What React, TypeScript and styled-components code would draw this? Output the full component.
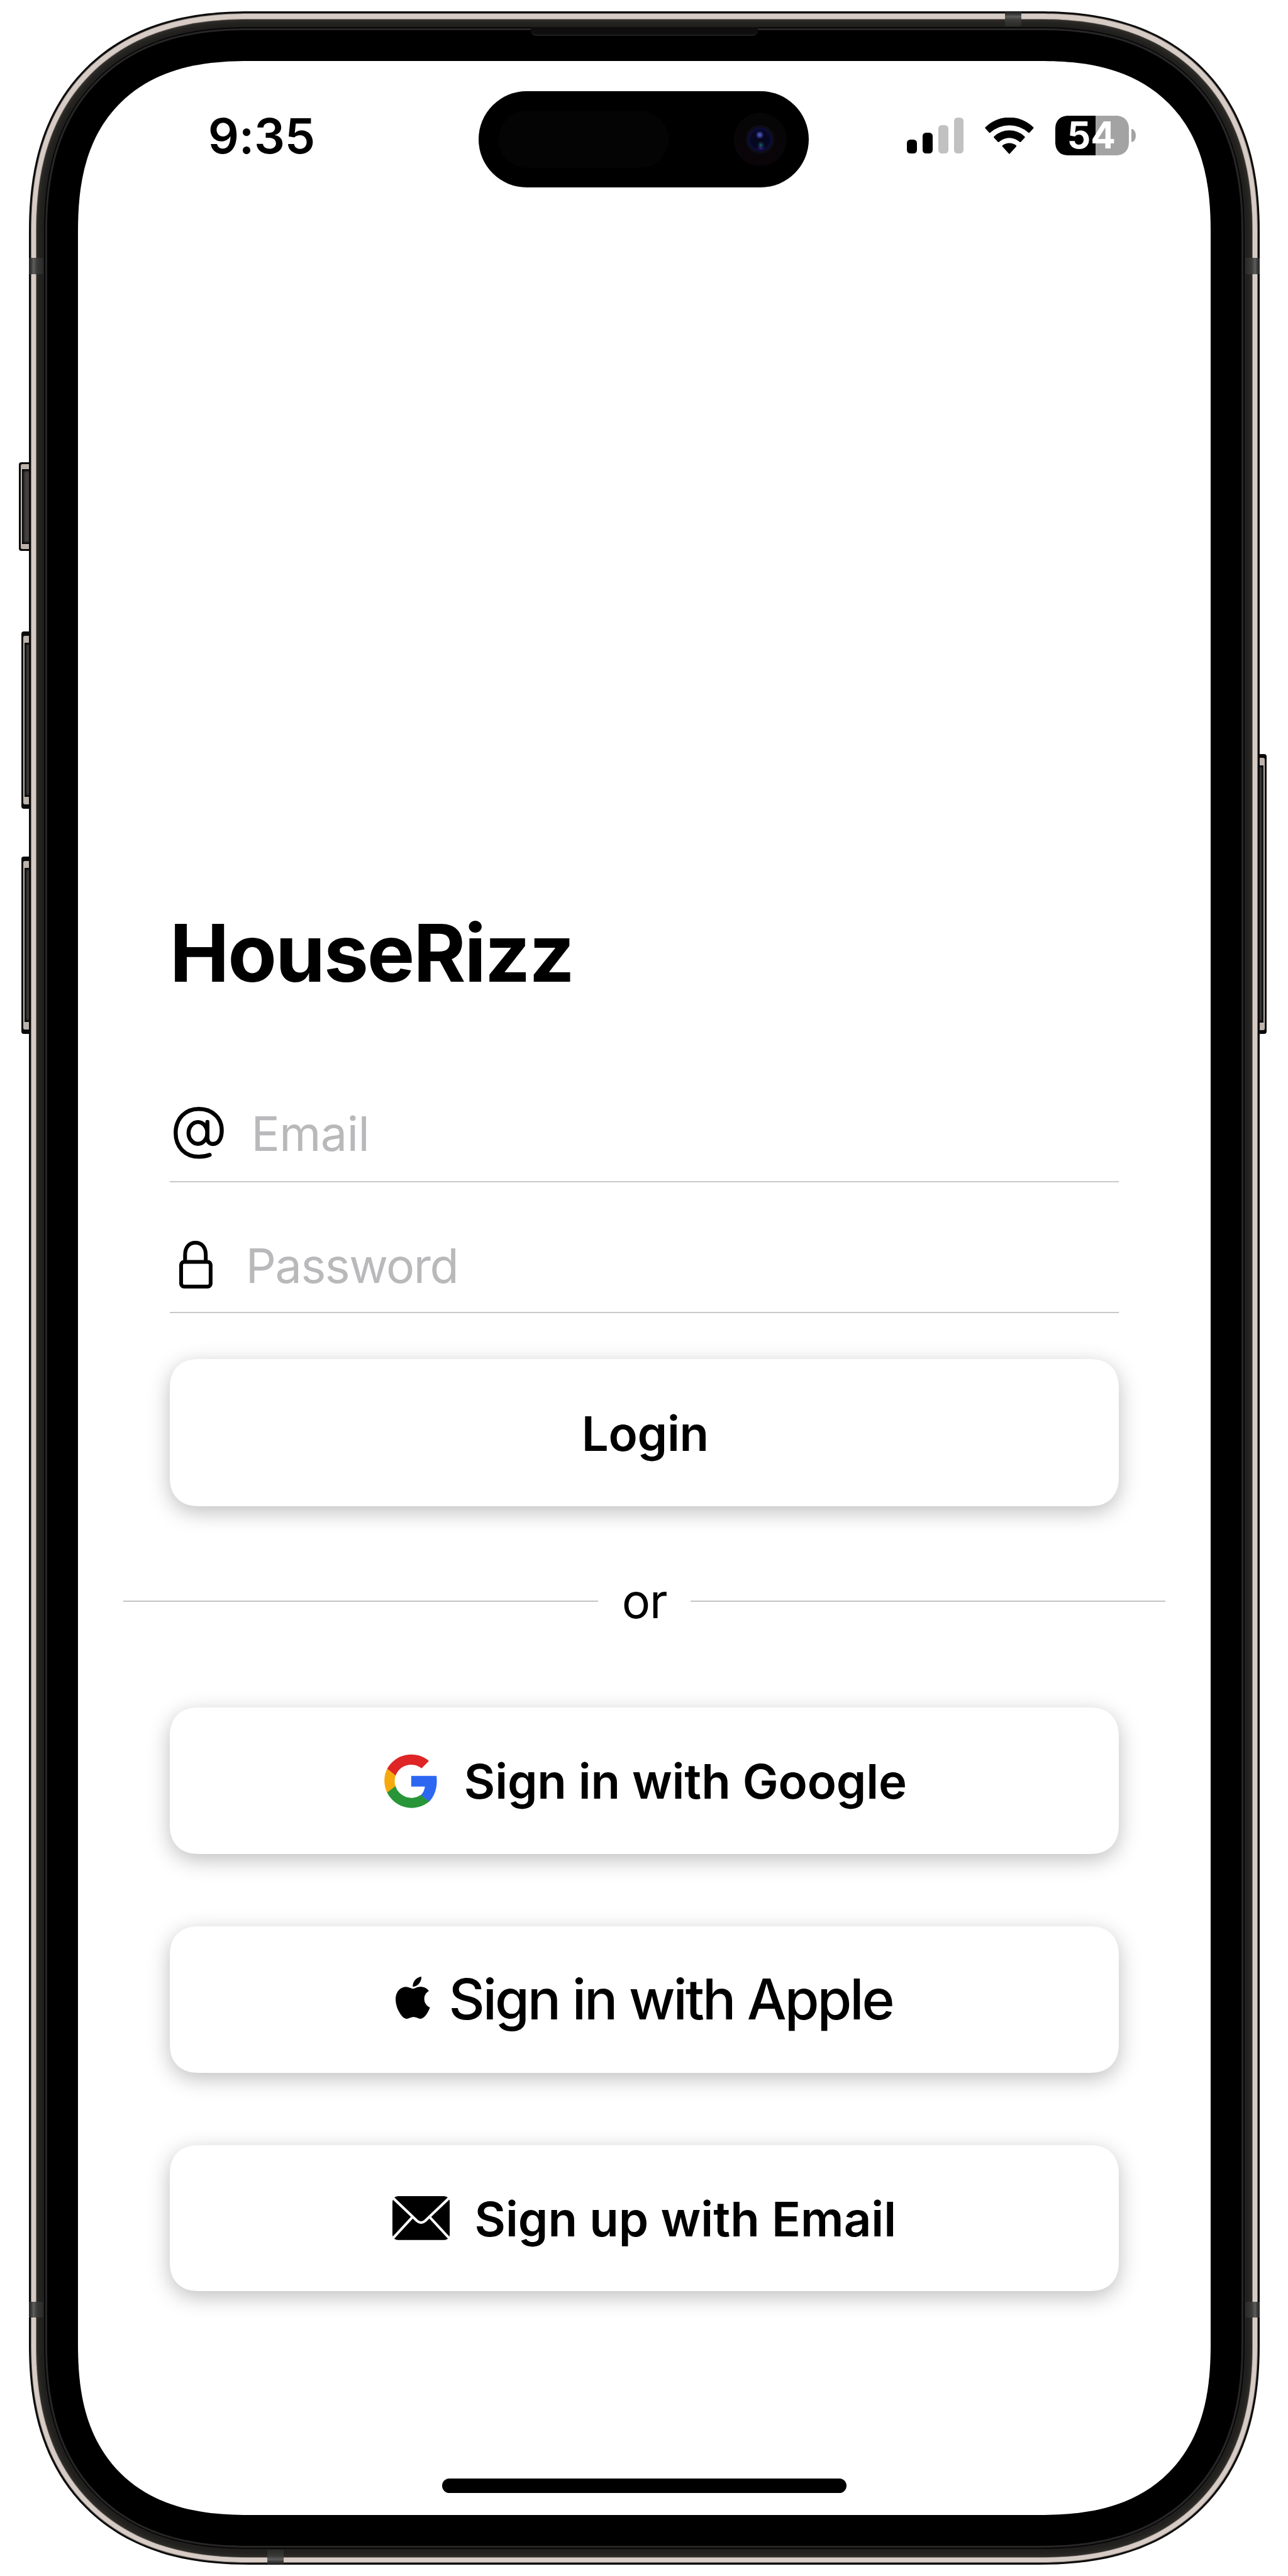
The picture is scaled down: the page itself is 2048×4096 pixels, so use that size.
import React from "react";
import styled, { createGlobalStyle } from "styled-components";

/* Design units: the artboard is 3000 units wide and is rendered 2048px wide. */
const u = (n: number) => `${+((n * 2048) / 3000).toFixed(3)}px`;

const GlobalStyle = createGlobalStyle`
  * { box-sizing: border-box; }
  html, body { margin: 0; padding: 0; background: #fff; }
  body {
    font-family: Inter, "Liberation Sans", sans-serif;
    color: #000;
    -webkit-font-smoothing: antialiased;
  }
`;

const Page = styled.main`
  width: 2048px;
  height: 4096px;
  padding: ${u(26.8)} ${u(65.3)} 0 ${u(66.7)};
  overflow: hidden;
  background: #fff;
`;

/* ---------- device ---------- */

const Phone = styled.div`
  position: relative;
  width: 100%;
  height: ${u(5946.5)};
`;

const Shell = styled.div<{ $radius: number; $curve?: number; $pad: string; $fill: string; $glow?: string }>`
  position: relative;
  width: 100%;
  height: 100%;
  padding: ${(p) => p.$pad};
  border-radius: ${(p) => u(p.$radius)};
  corner-shape: superellipse(${(p) => p.$curve ?? 1.22});
  background: ${(p) => p.$fill};
  box-shadow: ${(p) => p.$glow ?? "none"};
`;

const SideKey = styled.div<{ $side: "left" | "right"; $top: number; $height: number; $depth: number; $cap: number }>`
  position: absolute;
  ${(p) => p.$side}: ${(p) => u(-p.$depth)};
  top: ${(p) => u(p.$top)};
  width: ${(p) => u(p.$depth + 8)};
  height: ${(p) => u(p.$height)};
  padding: ${(p) =>
    p.$side === "left"
      ? `${u(p.$cap)} 0 ${u(p.$cap)} ${u(4.4)}`
      : `${u(p.$cap)} ${u(4.4)} ${u(p.$cap)} 0`};
  border-radius: ${(p) => (p.$side === "left" ? `${u(6)} 0 0 ${u(6)}` : `0 ${u(6)} ${u(6)} 0`)};
  background: #0c0b0b;
`;

const KeyRim = styled.div<{ $side: "left" | "right"; $cap: number }>`
  height: 100%;
  padding: ${(p) => (p.$side === "left" ? `${u(p.$cap)} 0 ${u(p.$cap)} ${u(3)}` : `${u(p.$cap)} ${u(3)} ${u(p.$cap)} 0`)};
  border-radius: ${(p) => (p.$side === "left" ? `${u(4)} 0 0 ${u(4)}` : `0 ${u(4)} ${u(4)} 0`)};
  background: #bdb3ab;
`;

const KeyFace = styled.div`
  height: 100%;
  background: #454140;
  box-shadow: inset 0 0 ${u(5)} ${u(4)} #050505;
`;

const Antenna = styled.div<{ $edge: "left" | "right" | "top" | "bottom"; $at: number; $length: number }>`
  position: absolute;
  ${(p) => p.$edge}: ${u(1)};
  ${(p) => (p.$edge === "left" || p.$edge === "right" ? "top" : "left")}: ${(p) => u(p.$at)};
  ${(p) => (p.$edge === "left" || p.$edge === "right" ? "width" : "height")}: ${u(34)};
  ${(p) => (p.$edge === "left" || p.$edge === "right" ? "height" : "width")}: ${(p) => u(p.$length)};
  background: linear-gradient(
    to ${(p) => ({ left: "right", right: "left", top: "bottom", bottom: "top" })[p.$edge]},
    #232323 0%, #383838 15%, #5e5e5d 32%, #3a3a39 55%, #292928 100%
  );
`;

const Earpiece = styled.div`
  position: absolute;
  top: ${u(36)};
  left: ${u(1169.8)};
  width: ${u(528)};
  height: ${u(20.5)};
  border-radius: 0 0 ${u(13)} ${u(13)};
  border-bottom: ${u(3)} solid #1f1f1f;
  background: #0e0e0e;
`;

const Screen = styled.div`
  position: relative;
  display: flex;
  flex-direction: column;
  width: 100%;
  height: 100%;
  border-radius: ${u(398)};
  corner-shape: superellipse(1.29);
  background: #fff;
`;

/* ---------- status bar ---------- */

const StatusBar = styled.header`
  display: flex;
  align-items: center;
  justify-content: space-between;
  flex: none;
  height: ${u(346)};
  padding: 0 ${u(175)} 0 ${u(303)};
`;

const Clock = styled.time`
  padding-top: ${u(2)};
  font-size: ${u(113)};
  font-weight: 600;
  line-height: 1.2;
  letter-spacing: ${u(-0.5)};
`;

const StatusIcons = styled.div`
  display: flex;
  align-items: center;
  height: ${u(94)};
`;

const Signal = styled.div`
  display: flex;
  align-items: flex-end;
  justify-content: space-between;
  width: ${u(132)};
  height: ${u(84)};
`;

const SignalBar = styled.span<{ $height: number; $on: boolean }>`
  width: ${u(23)};
  height: ${(p) => u(p.$height)};
  border-radius: ${u(8)};
  background: ${(p) => (p.$on ? "#000" : "#c1c1c1")};
`;

const WifiIcon = styled.svg`
  display: block;
  width: ${u(114)};
  height: ${u(85)};
  margin: 0 ${u(50)} 0 ${u(49.6)};
`;

const Battery = styled.div`
  display: flex;
  align-items: center;
  gap: ${u(6)};
`;

const BatteryBody = styled.div`
  display: flex;
  align-items: center;
  justify-content: center;
  width: ${u(170.5)};
  height: ${u(93.5)};
  padding-right: ${u(3)};
  border-radius: ${u(31)};
  corner-shape: superellipse(1.2);
  background: linear-gradient(to right, #000 54.5%, #a3a3a3 54.5%);
  color: #fff;
  font-size: ${u(86)};
  font-weight: 700;
  line-height: 1;
`;

const BatteryTip = styled.span`
  width: ${u(10)};
  height: ${u(30)};
  border-radius: 0 ${u(10)} ${u(10)} 0 / 0 ${u(15)} ${u(15)} 0;
  background: #a3a3a3;
`;

const Island = styled.div`
  position: absolute;
  top: ${u(69.1)};
  left: ${u(933.7)};
  display: flex;
  align-items: center;
  justify-content: space-between;
  width: ${u(769.2)};
  height: ${u(224.7)};
  padding: 0 ${u(52)} 0 ${u(46.5)};
  border-radius: ${u(112.4)};
  background: #000;
`;

const Sensor = styled.span`
  width: ${u(396)};
  height: ${u(134)};
  border-radius: ${u(67)};
  background: #040404;
`;

const LensIcon = styled.svg`
  display: block;
  width: ${u(125)};
  height: ${u(125)};
`;

/* ---------- form ---------- */

const Content = styled.section`
  display: flex;
  flex-direction: column;
  padding: ${u(1619)} ${u(213.5)} 0;
`;

const Title = styled.h1`
  margin: 0 0 ${u(198.6)};
  font-size: ${u(186)};
  font-weight: 700;
  line-height: ${u(224)};
  letter-spacing: ${u(-3.2)};
`;

const Field = styled.label<{ $height: number; $indent: number; $gap: number; $after: number }>`
  display: flex;
  align-items: center;
  gap: ${(p) => u(p.$gap)};
  height: ${(p) => u(p.$height + 3)};
  margin-bottom: ${(p) => u(p.$after)};
  padding-left: ${(p) => u(p.$indent)};
  border-bottom: 2px solid #c9c9c9;
`;

const Placeholder = styled.span<{ $tracking: number }>`
  padding-top: ${u(3)};
  color: #b9b9bb;
  font-size: ${u(110.6)};
  line-height: 1.2;
  letter-spacing: ${(p) => u(p.$tracking)};
`;

const FieldIcon = styled.svg<{ $w: number; $h: number }>`
  display: block;
  flex: none;
  width: ${(p) => u(p.$w)};
  height: ${(p) => u(p.$h)};
  margin-bottom: ${u(4)};
`;

const Button = styled.button<{ $height?: number; $gap?: number; $shift?: number }>`
  display: flex;
  align-items: center;
  justify-content: center;
  gap: ${(p) => u(p.$gap ?? 0)};
  width: 100%;
  height: ${(p) => u(p.$height ?? 340.5)};
  padding: 0 0 0 ${(p) => u(p.$shift ?? 0)};
  border: 0;
  border-radius: ${u(68)};
  corner-shape: superellipse(1.22);
  background: #fff;
  box-shadow: 0 ${u(13)} ${u(50)} rgba(0, 0, 0, 0.26);
  color: #000;
  font-family: inherit;
`;

const Label = styled.span<{ $size?: number; $weight?: number; $tracking?: number; $drop?: number }>`
  padding-top: ${(p) => u(p.$drop ?? 4)};
  font-size: ${(p) => u(p.$size ?? 111.5)};
  font-weight: ${(p) => p.$weight ?? 600};
  line-height: 1.2;
  letter-spacing: ${(p) => u(p.$tracking ?? 0)};
  white-space: pre;
`;

const BrandIcon = styled.svg<{ $w: number; $h: number; $lift?: number }>`
  display: block;
  flex: none;
  width: ${(p) => u(p.$w)};
  height: ${(p) => u(p.$h)};
  margin-bottom: ${(p) => u(p.$lift ?? 0)};
`;

const Divider = styled.div`
  display: flex;
  align-items: center;
  height: ${u(134)};
  margin: ${u(154)} ${u(-107.8)} ${u(181.7)};
`;

const Rule = styled.span`
  flex: 1;
  height: 2px;
  background: #c4c4c4;
`;

const DividerText = styled.span`
  width: ${u(215.4)};
  padding-top: ${u(4)};
  font-size: ${u(111)};
  line-height: 1.2;
  letter-spacing: ${u(-2)};
  text-align: center;
`;

const Providers = styled.div`
  display: flex;
  flex-direction: column;
  gap: ${u(169)};
`;

const HomeIndicator = styled.div`
  flex: none;
  width: ${u(942)};
  height: ${u(34)};
  margin: auto auto ${u(51)};
  border-radius: ${u(17)};
  background: #000;
`;

/* ---------- drawings ---------- */

const Wifi = () => (
  <WifiIcon viewBox="0 0 114 85">
    <path d="M1.2 25.4Q-.4 23.8 1.2 22.3A79.5 79.5 0 0 1 112.8 22.3Q114.4 23.8 112.8 25.4L104.6 34.6Q103 36.4 101.2 34.7A67 67 0 0 0 12.8 34.7Q11 36.4 9.4 34.6Z" />
    <path d="M21.3 47Q19.8 45.4 21.4 43.9A52 52 0 0 1 92.6 43.9Q94.2 45.4 92.7 47L84.3 56.2Q82.6 58 80.8 56.4A36 36 0 0 0 33.2 56.4Q31.4 58 29.7 56.2Z" />
    <path d="M41.2 67.6Q39.7 65.9 41.4 64.5A26 26 0 0 1 72.6 64.5Q74.3 65.9 72.8 67.6L58.6 83.6Q57 85.4 55.4 83.6Z" />
  </WifiIcon>
);

const Lens = () => (
  <LensIcon viewBox="0 0 125 125">
    <defs>
      <linearGradient id="lensBase" x1="0" y1="0" x2="0" y2="1">
        <stop offset="0" stopColor="#060606" />
        <stop offset="1" stopColor="#0a0408" />
      </linearGradient>
      <radialGradient id="lensRing">
        <stop offset="0" stopColor="#05051a" />
        <stop offset="0.66" stopColor="#070722" />
        <stop offset="0.74" stopColor="#0c0c44" />
        <stop offset="0.82" stopColor="#0d0d20" />
        <stop offset="1" stopColor="#0c0c12" />
      </radialGradient>
      <radialGradient id="lensBlue">
        <stop offset="0" stopColor="#5661bd" />
        <stop offset="0.5" stopColor="#2d3385" />
        <stop offset="1" stopColor="#0a0a30" stopOpacity="0" />
      </radialGradient>
      <radialGradient id="lensTeal">
        <stop offset="0" stopColor="#1d6570" />
        <stop offset="1" stopColor="#082038" stopOpacity="0" />
      </radialGradient>
      <radialGradient id="lensViolet">
        <stop offset="0" stopColor="#5a12a0" />
        <stop offset="1" stopColor="#10104a" stopOpacity="0" />
      </radialGradient>
    </defs>
    <circle cx="62.5" cy="62.5" r="62" fill="url(#lensBase)" />
    <circle cx="62.5" cy="62.5" r="33.5" fill="url(#lensRing)" />
    <circle cx="61.5" cy="52" r="11" fill="url(#lensBlue)" />
    <ellipse cx="64" cy="83" rx="11" ry="6" fill="url(#lensViolet)" />
    <ellipse cx="64" cy="76" rx="10" ry="11" fill="url(#lensTeal)" />
  </LensIcon>
);

const AtSign = () => (
  <FieldIcon $w={117} $h={121} viewBox="0 0 117 121" fill="none" stroke="#000" strokeWidth="9.4" strokeLinecap="round">
    <path d="M84 111.8C76 114.9 68 116.2 59 116.2C27 116.2 4.8 93.5 4.8 60.5C4.8 27.5 27.5 4.8 58.8 4.8C90 4.8 112.2 25.5 112.2 54.5C112.2 74 104.5 86.4 92 86.4C83.4 86.4 78.8 81 78.8 72.5V35.2" />
    <ellipse cx="56.8" cy="60.7" rx="21.9" ry="25.4" />
  </FieldIcon>
);

const Lock = () => (
  <FieldIcon $w={77.5} $h={111} viewBox="0 0 77.5 111" fill="none" stroke="#000" strokeWidth="8.8">
    <rect x="4.4" y="49" width="68.7" height="57.6" rx="7" />
    <path d="M13.6 49V32.5C13.6 14.5 23.5 4.5 37.8 4.5C52 4.5 61.8 14.5 61.8 32.5V49" />
  </FieldIcon>
);

const GoogleLogo = () => (
  <BrandIcon $w={122.5} $h={127.4} viewBox="0 0 122.5 127.4">
    <path fill="#df2525" d="M104 17.6L87 34.9A38.5 38.5 0 0 0 26.4 52L6.6 36.2A63.6 63.6 0 0 1 104 17.6Z" />
    <path fill="#f6a90e" d="M6.8 35.6L26.4 51.4A39 39 0 0 0 26.2 76.6L6.8 91.8A63.6 63.6 0 0 1 6.8 35.6Z" />
    <path fill="#289539" d="M6.6 91.2L26.1 76A38.6 38.6 0 0 0 85.2 96.6L105.2 111.6A63.6 63.6 0 0 1 6.6 91.2Z" />
    <path fill="#2c67f2" d="M62.8 52.2H121.6C124.6 74 119.4 97.5 105 111.9L85 96.9Q92.8 90.6 94.8 77.4H62.8Z" />
  </BrandIcon>
);

const AppleLogo = () => (
  <BrandIcon $w={80} $h={98} $lift={7} viewBox="4 32 376.4 448" preserveAspectRatio="none">
    <path d="M318.7 268.7c-.2-36.7 16.4-64.4 50-84.8-18.8-26.9-47.2-41.7-84.7-44.6-35.5-2.8-74.3 20.7-88.5 20.7-15 0-49.4-19.7-76.4-19.7C63.3 141.2 4 184.8 4 273.5q0 39.3 14.4 81.2c12.8 36.7 59 126.7 107.2 125.2 25.2-.6 43-17.9 75.8-17.9 31.8 0 48.3 17.9 76.4 17.9 48.6-.7 90.4-82.5 102.6-119.3-65.2-30.7-61.7-90-61.7-91.9zm-56.6-164.2c27.3-32.4 24.8-61.9 24-72.5-24.1 1.4-52 16.4-67.9 34.9-17.5 19.8-27.8 44.3-25.6 71.9 26.1 2 49.9-11.4 69.5-34.3z" />
  </BrandIcon>
);

const Envelope = () => (
  <BrandIcon $w={133.4} $h={102.2} viewBox="0 0 133.4 102.2">
    <rect width="133.4" height="102.2" rx="13" />
    <g fill="none" stroke="#fff" strokeWidth="6">
      <path d="M0 3L57.5 57.8Q66.7 65.6 75.9 57.8L133.4 3" />
      <path d="M0 99.2L46.5 49M133.4 99.2L86.9 49" />
    </g>
  </BrandIcon>
);

const signal = [
  { height: 32.5, on: true },
  { height: 48, on: true },
  { height: 66, on: false },
  { height: 84, on: false },
];

export default function App() {
  return (
    <>
      <GlobalStyle />
      <Page>
        <Phone>
          <SideKey $side="left" $top={1049.7} $height={206.5} $depth={22.5} $cap={4}><KeyRim $side="left" $cap={12}><KeyFace /></KeyRim></SideKey>
          <SideKey $side="left" $top={1443.5} $height={413} $depth={16.8} $cap={10}><KeyRim $side="left" $cap={17}><KeyFace /></KeyRim></SideKey>
          <SideKey $side="left" $top={1968.2} $height={413} $depth={16.8} $cap={10}><KeyRim $side="left" $cap={17}><KeyFace /></KeyRim></SideKey>
          <SideKey $side="right" $top={1729} $height={653} $depth={16} $cap={10}><KeyRim $side="right" $cap={17}><KeyFace /></KeyRim></SideKey>

          <Shell $radius={513} $pad={u(4.5)} $fill="#0b0b0b">
            <Shell $radius={508.5} $pad={u(1.5)} $fill="#7d736b">
              <Shell $radius={507} $pad={u(10.5)} $fill="#d6ccc5">
                <Shell $radius={496.5} $pad={u(1.5)} $fill="#857b73">
                  <Shell $radius={495} $pad={u(18.5)} $fill="#21201e" $glow={`inset 0 0 ${u(12)} ${u(1)} #3d3a35`}>
                    <Shell $radius={476.5} $curve={1.23} $pad={u(2.8)} $fill="#060606">
                      <Shell $radius={473.7} $curve={1.24} $pad={u(4)} $fill="#262626">
                        <Shell $radius={469.7} $curve={1.24} $pad={`${u(72.8)} ${u(71.7)}`} $fill="#000">
                          <Screen>
                            <StatusBar>
                              <Clock>9:35</Clock>
                              <StatusIcons>
                                <Signal>
                                  {signal.map((bar) => (
                                    <SignalBar key={bar.height} $height={bar.height} $on={bar.on} />
                                  ))}
                                </Signal>
                                <Wifi />
                                <Battery>
                                  <BatteryBody>54</BatteryBody>
                                  <BatteryTip />
                                </Battery>
                              </StatusIcons>
                            </StatusBar>

                            <Content>
                              <Title>HouseRizz</Title>
                              <Field $height={220.4} $indent={9} $gap={64} $after={86.3}>
                                <AtSign />
                                <Placeholder $tracking={-0.8}>Email</Placeholder>
                              </Field>
                              <Field $height={215.6} $indent={23} $gap={77} $after={107.5}>
                                <Lock />
                                <Placeholder $tracking={-2.2}>Password</Placeholder>
                              </Field>
                              <Button $height={341.7} $shift={4}>
                                <Label $tracking={-0.4}>Login</Label>
                              </Button>

                              <Divider>
                                <Rule />
                                <DividerText>or</DividerText>
                                <Rule />
                              </Divider>

                              <Providers>
                                <Button $gap={63} $shift={6}>
                                  <GoogleLogo />
                                  <Label $tracking={-0.25}>Sign in with Google</Label>
                                </Button>
                                <Button $gap={43}>
                                  <AppleLogo />
                                  <Label $size={130} $weight={500} $tracking={-4.5} $drop={0}>Sign in with Apple</Label>
                                </Button>
                                <Button $gap={58}>
                                  <Envelope />
                                  <Label>Sign up with Email</Label>
                                </Button>
                              </Providers>
                            </Content>

                            <HomeIndicator />
                            <Island>
                              <Sensor />
                              <Lens />
                            </Island>
                          </Screen>
                        </Shell>
                      </Shell>
                    </Shell>
                  </Shell>
                </Shell>
              </Shell>
            </Shell>
            <Antenna $edge="left" $at={574.5} $length={37} />
            <Antenna $edge="right" $at={574.5} $length={37} />
            <Antenna $edge="left" $at={5334.7} $length={37} />
            <Antenna $edge="right" $at={5334.7} $length={37} />
            <Antenna $edge="top" $at={2274} $length={38} />
            <Antenna $edge="bottom" $at={556.3} $length={37} />
            <Earpiece />
          </Shell>
        </Phone>
      </Page>
    </>
  );
}
